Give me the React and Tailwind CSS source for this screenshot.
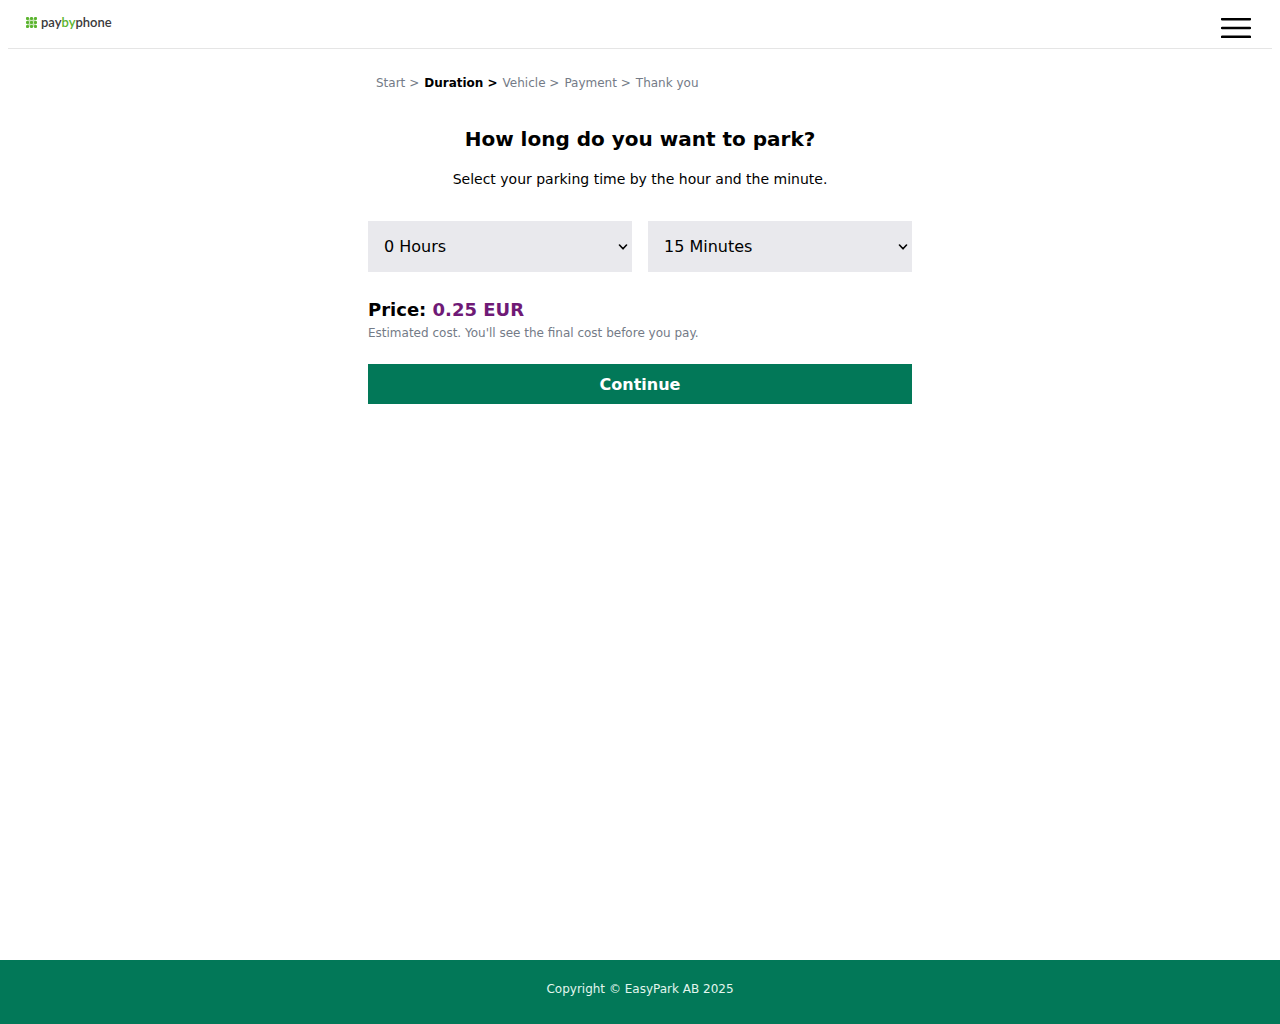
import { useState } from 'react';

const STEPS = ['Start', 'Duration', 'Vehicle', 'Payment', 'Thank you'];
const CURRENT_STEP = 'Duration';

const HOURS = Array.from({ length: 25 }, (_, i) => i);
const MINUTES = [0, 15, 30, 45];
const PRICE_PER_HOUR = 1;

function Logo() {
  return (
    <a href="/" aria-label="paybyphone" className="flex items-center gap-1">
      <svg width="11" height="11" viewBox="0 0 11 11" fill="#5cb531" aria-hidden="true">
        {[0, 4, 8].map((y) =>
          [0, 4, 8].map((x) => (
            <rect key={`${x}-${y}`} x={x} y={y} width="3" height="3" rx="1" />
          ))
        )}
        <path d="M1 1h9v9H1z" fillOpacity="0.35" />
      </svg>
      <span className="[font-family:Lato,sans-serif] text-[13px] leading-4 font-semibold text-[#3a3a3c]">
        pay<span className="text-[#5cb531]">by</span>phone
      </span>
    </a>
  );
}

function Header() {
  return (
    <header className="mx-2 flex h-[49px] items-start justify-between border-b border-[#e5e5e5] pr-[21px] pl-[18px]">
      <div className="pt-[14px]">
        <Logo />
      </div>
      <button type="button" aria-label="Menu" className="mt-[17px] cursor-pointer">
        <svg width="30" height="22" viewBox="0 0 30 22" aria-hidden="true">
          <path
            d="M1 2.2h28M1 11h28M1 19.8h28"
            stroke="#000"
            strokeWidth="2.5"
            strokeLinecap="round"
          />
        </svg>
      </button>
    </header>
  );
}

function Breadcrumb() {
  return (
    <nav aria-label="Progress" className="px-2">
      <ol className="flex flex-wrap gap-x-[5px] text-xs leading-5 text-[#747b87]">
        {STEPS.map((step, i) => (
          <li
            key={step}
            className={step === CURRENT_STEP ? 'font-bold text-black' : ''}
            aria-current={step === CURRENT_STEP ? 'step' : undefined}
          >
            {step}
            {i < STEPS.length - 1 && ' >'}
          </li>
        ))}
      </ol>
    </nav>
  );
}

function TimeSelect({ label, options, value, onChange }) {
  return (
    <div className="relative min-w-0 flex-1">
      <select
        aria-label={label}
        className="block h-[51px] w-full cursor-pointer appearance-none rounded-none bg-[#e9e9ed] px-4 text-base text-black"
        value={value}
        onChange={(e) => onChange(Number(e.target.value))}
      >
        {options.map((n) => (
          <option key={n} value={n}>
            {n} {label}
          </option>
        ))}
      </select>
      <svg
        className="pointer-events-none absolute inset-y-0 right-1 my-auto"
        width="10"
        height="6"
        viewBox="0 0 10 6"
        fill="none"
        aria-hidden="true"
      >
        <path
          d="M1.5 1L5 4.8L8.5 1"
          stroke="#000"
          strokeWidth="1.6"
          strokeLinecap="round"
          strokeLinejoin="round"
        />
      </svg>
    </div>
  );
}

export default function App() {
  const [hours, setHours] = useState(0);
  const [minutes, setMinutes] = useState(15);

  const price = ((hours + minutes / 60) * PRICE_PER_HOUR).toFixed(2);

  return (
    <div className="flex min-h-screen flex-col bg-white font-['DejaVu_Sans',sans-serif] text-black">
      <Header />

      <main className="mx-auto w-full max-w-[544px] flex-1 pt-6">
        <Breadcrumb />

        <h1 className="mt-8 text-center text-xl font-bold">How long do you want to park?</h1>
        <p className="mt-4 text-center text-sm">
          Select your parking time by the hour and the minute.
        </p>

        <form onSubmit={(e) => e.preventDefault()}>
          <div className="mt-8 flex gap-4">
            <TimeSelect label="Hours" options={HOURS} value={hours} onChange={setHours} />
            <TimeSelect label="Minutes" options={MINUTES} value={minutes} onChange={setMinutes} />
          </div>

          {/* Price */}
          <p className="mt-6 text-lg font-bold">
            Price: <span className="text-[#6f1a76]">{price} EUR</span>
          </p>
          <p className="text-xs leading-[18px] text-[#747b87]">
            Estimated cost. You'll see the final cost before you pay.
          </p>

          <button
            type="submit"
            className="mt-[22px] h-10 w-full cursor-pointer bg-[#027858] pt-0.5 text-base font-bold text-white"
          >
            Continue
          </button>
        </form>
      </main>

      <footer className="h-16 bg-[#027858] pt-[21px] text-center text-xs text-[#e3f6ee]">
        Copyright © EasyPark AB 2025
      </footer>
    </div>
  );
}
